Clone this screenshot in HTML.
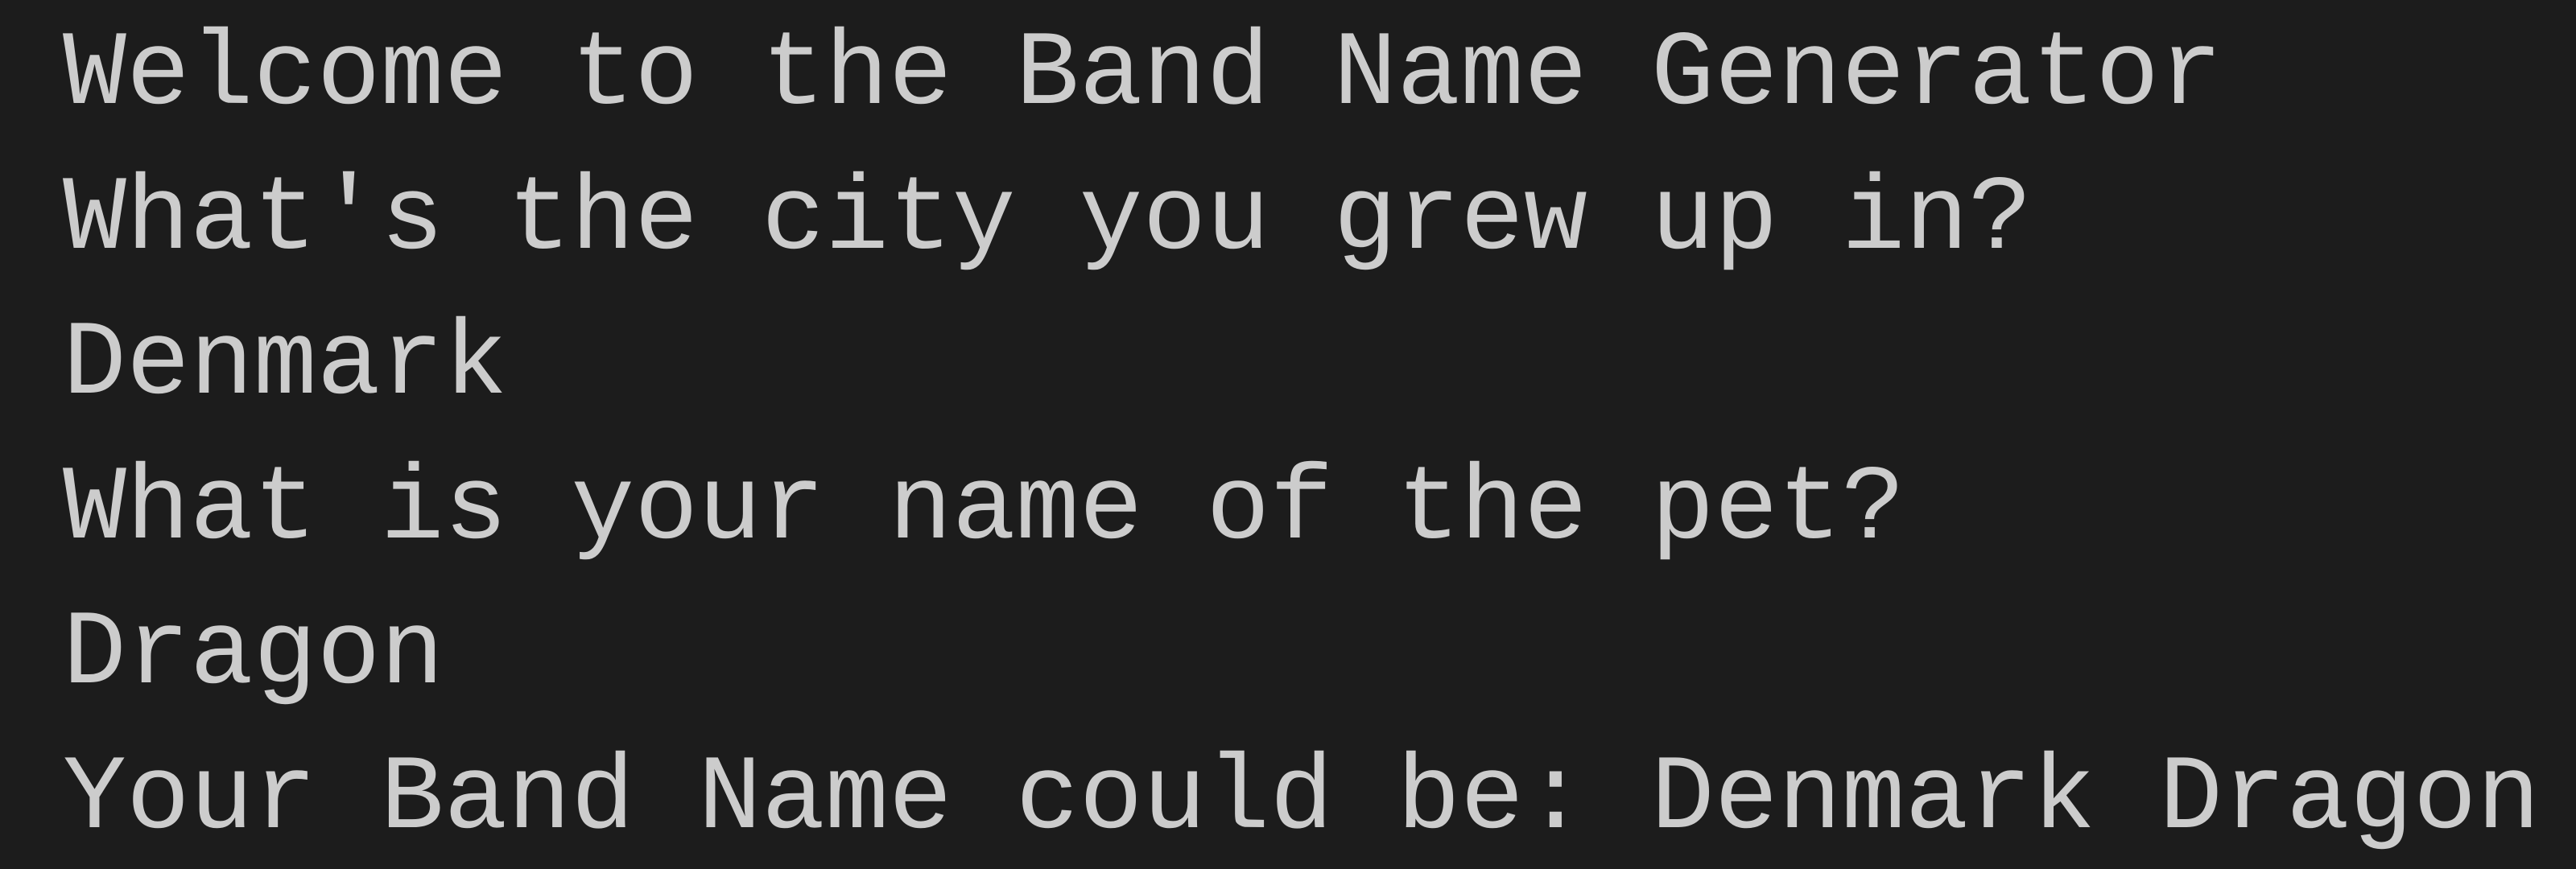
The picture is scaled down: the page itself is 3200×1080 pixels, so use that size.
<!DOCTYPE html>
<html><head><meta charset="utf-8"><style>
html,body{margin:0;padding:0;background:#1c1c1c;width:3200px;height:1080px;overflow:hidden}
pre{margin:0;padding:4px 0 0 78px;font-family:"Liberation Mono",monospace;font-size:131.5px;line-height:180px;color:#cccccc;white-space:pre}
</style></head><body><pre>Welcome to the Band Name Generator
What's the city you grew up in?
Denmark
What is your name of the pet?
Dragon
Your Band Name could be: Denmark Dragon</pre></body></html>
